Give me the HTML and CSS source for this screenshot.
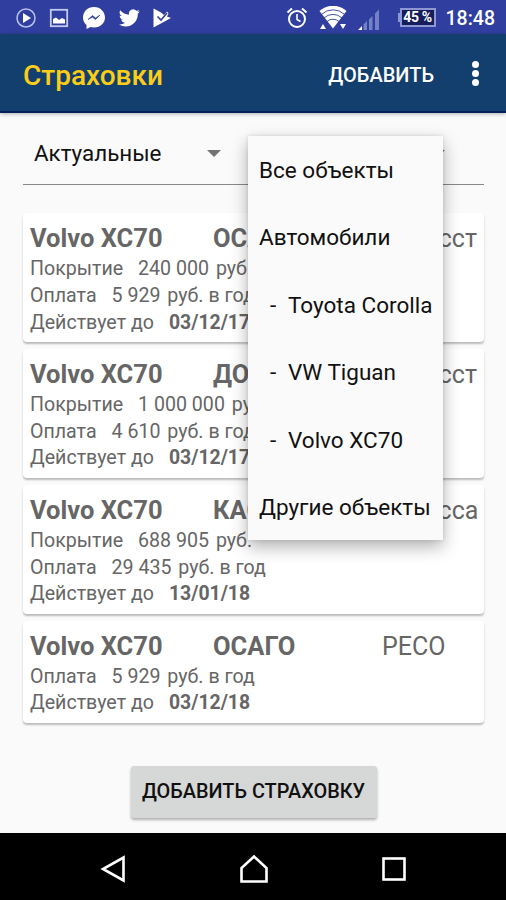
FILE: index.html
```html
<!DOCTYPE html>
<html lang="ru">

<head>
    <meta charset="UTF-8">
    <meta name="viewport" content="width=device-width, initial-scale=1.0">
    <title>Страховки</title>
    <link rel="stylesheet" href="styles.css">
</head>

<body>
    <!-- System status bar -->
    <div class="status-bar">
        <div class="status-left">
            <svg width="20" height="20" viewBox="0 0 20 20">
                <circle cx="10" cy="10" r="9" fill="none" stroke="#b9c1ee" stroke-width="1.5" />
                <path d="M7 5l8 5-8 5z" fill="#fff" />
            </svg>
            <svg width="20" height="20" viewBox="0 0 20 20">
                <rect x="1.8" y="1.8" width="16.4" height="16.4" fill="none" stroke="#c3caf0" stroke-width="1.8" />
                <path d="M4 15.500V11l3-1.500 3 2.500 3-2 3 1.500v4z" fill="#fff" />
            </svg>
            <svg width="24" height="24" viewBox="0 0 24 24">
                <path d="M12 1C5.500 1 1 5.700 1 11.500c0 3.300 1.300 5.700 3.500 7.500v4l4-2c1.100.3 2.300.5 3.500.5 6.500 0 11-4.500 11-10S18.500 1 12 1z" fill="#fff" />
                <path d="M6 13.500l4.500-4 3 2.500L18 9l-4.500 4.500-3-2.300z" fill="#303f9f" stroke="#303f9f" stroke-width=".6" />
            </svg>
            <svg width="21" height="20" viewBox="0 2.500 24 20">
                <path d="M23.600 4.900c-.9.400-1.800.6-2.800.8 1-.6 1.800-1.600 2.200-2.700-1 .6-2 1-3.100 1.200A4.900 4.900 0 0 0 11.500 8.700C7.500 8.500 3.900 6.600 1.500 3.600A4.900 4.900 0 0 0 3 10.100c-.8 0-1.600-.2-2.200-.6v.1c0 2.300 1.600 4.300 3.900 4.800-.7.200-1.500.2-2.200.1a4.900 4.900 0 0 0 4.600 3.400A9.900 9.900 0 0 1 0 19.900a13.900 13.900 0 0 0 7.500 2.200c9.100 0 14-7.500 14-14v-.6c1-.7 1.800-1.600 2.100-2.600z" fill="#fff" />
            </svg>
            <svg class="play" width="20" height="20" viewBox="0 0 20 20">
                <path d="M1.500 0.500L9 4.500 12 7l3-3.500 1.500 2L15 8.500l4 1.500L1.500 19.500z" fill="#fff" />
                <path d="M5.500 8.500l3.500 3.500L15 5" fill="none" stroke="#303f9f" stroke-width="1.600" />
            </svg>
        </div>
        <div class="status-right">
            <svg width="22" height="22" viewBox="0 0 22 22" fill="none" stroke="#fff">
                <circle cx="11" cy="12" r="8" stroke-width="2" />
                <path d="M11 7v5.500l3.500 2" stroke-width="1.600" />
                <path d="M1.500 5.500l4.500-4M20.500 5.500l-4.500-4" stroke-width="2" />
            </svg>
            <svg class="wifi" width="28" height="24" viewBox="0 0 28 24">
                <path d="M0.500 5a20 20 0 0 1 27 0L14 22.500z" fill="#fff" />
                <path d="M2.500 8.300a17 17 0 0 1 23 0M5 12a13 13 0 0 1 18 0M8 15.500a9 9 0 0 1 12 0" fill="none" stroke="#303f9f" stroke-width=".9" />
                <path d="M1 23l3-5 3 5zM21 18h6l-3 5z" fill="#fff" />
            </svg>
            <svg class="signal" width="22" height="21" viewBox="0 0 22 21">
                <path d="M0 21l4-4v4z" fill="#fff" />
                <path d="M5.500 15.500L9 12v9H5.500zM11 10.500L14.500 7v14H11zM17 4.500L21 .500V21h-4z" fill="#7581c5" />
            </svg>
            <div class="battery">45 %</div>
            <span class="clock">18:48</span>
        </div>
    </div>

    <!-- App toolbar -->
    <div class="toolbar">
        <h1>Страховки</h1>
        <span class="toolbar-action">ДОБАВИТЬ</span>
        <div class="more"><i></i><i></i><i></i></div>
    </div>

    <div class="content">
        <div class="filters">
            <div class="spinner">
                <span>Актуальные</span>
                <i class="arrow"></i>
            </div>
            <div class="spinner">
                <span></span>
                <i class="arrow"></i>
            </div>

            <!-- Opened list of objects -->
            <ul class="menu">
                <li>Все объекты</li>
                <li>Автомобили</li>
                <li class="sub"><i>-</i>Toyota Corolla</li>
                <li class="sub"><i>-</i>VW Tiguan</li>
                <li class="sub"><i>-</i>Volvo XC70</li>
                <li>Другие объекты</li>
            </ul>
        </div>

        <!-- Insurance cards -->
        <div class="cards">
            <div class="card">
                <div class="card-title"><b>Volvo XC70</b><b>ОСАГО</b><span>Ингосст</span></div>
                <p><span>Покрытие</span><span>240 000</span> руб.</p>
                <p><span>Оплата</span><span>5 929</span> руб. в год</p>
                <p><span>Действует до</span><b>03/12/17</b></p>
            </div>
            <div class="card">
                <div class="card-title"><b>Volvo XC70</b><b>ДОСАГО</b><span>Ингосст</span></div>
                <p><span>Покрытие</span><span>1 000 000</span> руб.</p>
                <p><span>Оплата</span><span>4 610</span> руб. в год</p>
                <p><span>Действует до</span><b>03/12/17</b></p>
            </div>
            <div class="card">
                <div class="card-title"><b>Volvo XC70</b><b>КАСКО</b><span>Ренесса</span></div>
                <p><span>Покрытие</span><span>688 905</span> руб.</p>
                <p><span>Оплата</span><span>29 435</span> руб. в год</p>
                <p><span>Действует до</span><b>13/01/18</b></p>
            </div>
            <div class="card">
                <div class="card-title"><b>Volvo XC70</b><b>ОСАГО</b><span>РЕСО</span></div>
                <p><span>Оплата</span><span>5 929</span> руб. в год</p>
                <p><span>Действует до</span><b>03/12/18</b></p>
            </div>
        </div>

        <button type="button" class="add-button">ДОБАВИТЬ СТРАХОВКУ</button>
    </div>

    <!-- System navigation -->
    <div class="nav-bar">
        <svg width="28" height="30" viewBox="0 0 28 30">
            <path d="M24.500 3.500v23L4 15z" />
        </svg>
        <svg width="30" height="30" viewBox="0 0 30 30">
            <path d="M2.500 27.500V14L15 2.500 27.500 14v13.500z" />
        </svg>
        <svg width="26" height="30" viewBox="0 0 26 30">
            <rect x="2.500" y="4.500" width="21" height="21" />
        </svg>
    </div>
</body>

</html>
```
FILE: styles.css
```css
* {
    box-sizing: border-box;
}

body {
    font-family: Roboto, 'Noto Sans', sans-serif;
    margin: 0;
    height: 900px;
    display: flex;
    flex-direction: column;
    background-color: #fafafa;
    overflow: hidden;
}

i {
    font-style: normal;
}

/* Status bar */
.status-bar {
    height: 34px;
    padding: 1px 11px 0 16px;
    display: flex;
    align-items: center;
    justify-content: space-between;
    background-color: #303f9f;
    color: #fff;
}

.status-left {
    display: flex;
    align-items: center;
    gap: 13px;
}

.play {
    margin-left: -1px;
}

.status-right {
    display: flex;
    align-items: center;
}

.wifi {
    margin-left: 11px;
}

.signal {
    margin: 3px 20px 0 11px;
}

.battery {
    position: relative;
    width: 36px;
    height: 19px;
    border: 2px solid #8d97d2;
    background-color: #151d5c;
    font-size: 14px;
    font-weight: 700;
    line-height: 15px;
    letter-spacing: -0.3px;
    text-align: center;
    white-space: nowrap;
}

/* battery tip */
.battery::before {
    content: '';
    position: absolute;
    left: -4px;
    top: 3px;
    width: 3px;
    height: 9px;
    background-color: #8d97d2;
}

.clock {
    margin: 2px 0 0 10px;
    font-size: 19.500px;
    font-weight: 500;
}

/* Toolbar */
.toolbar {
    height: 79px;
    padding: 0 27px 0 23px;
    display: flex;
    align-items: center;
    background-color: #123f6d;
    border-bottom: 2px solid #06205c;
    box-shadow: 0 1px 4px rgba(0, 0, 0, 0.3);
}

h1 {
    flex: 1;
    margin: 5px 0 0;
    color: #fbcd17;
    font-size: 28px;
    font-weight: 500;
}

.toolbar-action {
    margin-top: 4px;
    color: #fff;
    font-size: 20px;
    font-weight: 500;
}

.more {
    margin: 1px 0 0 38px;
    display: flex;
    flex-direction: column;
    gap: 2px;
}

.more i {
    width: 7px;
    height: 7px;
    border-radius: 50%;
    background-color: #fff;
}

/* Filters */
.content {
    flex: 1;
    padding: 9px 22px 0 23px;
    display: flex;
    flex-direction: column;
}

.filters {
    position: relative;
    display: flex;
    height: 63px;
    border-bottom: 1px solid #888;
}

.spinner {
    width: 224px;
    padding: 0 26px 0 11px;
    display: flex;
    align-items: center;
    justify-content: space-between;
    font-size: 22.4px;
    color: #111;
}

.arrow {
    border: 7px solid transparent;
    border-top-color: #737373;
    border-bottom: none;
}

.menu {
    position: absolute;
    z-index: 2;
    top: 14px;
    left: 225px;
    width: 195px;
    margin: 0;
    padding: 0;
    list-style: none;
    background-color: #fafafa;
    box-shadow: 0 7px 16px rgba(0, 0, 0, 0.3), 0 0 4px rgba(0, 0, 0, 0.12);
}

.menu li {
    height: 67.4px;
    padding-left: 11px;
    font-size: 22.500px;
    line-height: 68px;
    white-space: nowrap;
    color: #111;
}

.menu .sub {
    padding-left: 22px;
}

.sub i {
    display: inline-block;
    width: 18px;
}

/* Cards */
.cards {
    margin-top: 28px;
    display: flex;
    flex-direction: column;
    gap: 7px;
}

.card {
    padding: 10px 0 5.500px 7px;
    border-radius: 4px;
    background-color: #fff;
    box-shadow: 0 2px 2px rgba(0, 0, 0, 0.25);
    color: #666;
}

.card-title {
    display: grid;
    grid-template-columns: 183px 169px 1fr;
    height: 33px;
    font-size: 25.500px;
    line-height: 31px;
}

.card-title span {
    font-size: 25px;
}

.card p {
    margin: 0;
    font-size: 19.6px;
    line-height: 26.8px;
    white-space: nowrap;
}

.card p span:first-child {
    margin-right: 15px;
}

.card p span + span {
    margin-right: 2px;
}

.card p b {
    font-size: 19.4px;
}

/* Bottom button */
.add-button {
    align-self: center;
    width: 246px;
    height: 52px;
    margin-top: 43px;
    padding: 0;
    border: none;
    border-radius: 3px;
    background-color: #d6d7d7;
    box-shadow: 0 2px 3px rgba(0, 0, 0, 0.3);
    color: #111;
    font-family: inherit;
    font-size: 19.9px;
    font-weight: 500;
}

/* Navigation bar */
.nav-bar {
    height: 67px;
    padding: 4px 99px 0 99px;
    display: flex;
    align-items: center;
    justify-content: space-between;
    background-color: #000;
}

.nav-bar svg {
    fill: none;
    stroke: #fff;
    stroke-width: 2.600;
}
```
